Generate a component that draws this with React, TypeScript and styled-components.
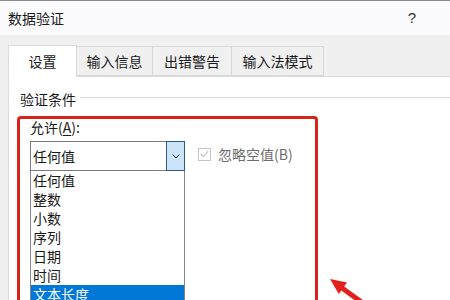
import React from 'react';
import styled, { createGlobalStyle } from 'styled-components';

const GlobalStyle = createGlobalStyle`
  html, body {
    margin: 0;
    padding: 0;
  }
  body {
    font-family: "Noto Sans CJK SC", "Noto Sans", sans-serif;
    background: #f0f0f0;
  }
`;

const Dialog = styled.div`
  position: relative;
  width: 450px;
  height: 300px;
  overflow: hidden;
  box-sizing: border-box;
  border-top: 1px solid #8c8c8c;
  background: #f0f0f0;
  display: flex;
  flex-direction: column;
`;

const TitleBar = styled.div`
  height: 34px;
  flex: none;
  display: flex;
  align-items: center;
  justify-content: space-between;
  padding: 0 34px 0 8px;
  background: #fbfafc;
  font-size: 14px;
  line-height: 16px;
  color: #1a1a1a;
`;

const Help = styled.span`
  font-family: "Liberation Sans", sans-serif;
  font-size: 15px;
  color: #333;
`;

const TabStrip = styled.div`
  flex: none;
  display: flex;
  align-items: flex-end;
  height: 41px;
  padding-left: 8px;
  box-sizing: border-box;
`;

const Tab = styled.div<{ $w: number; $active?: boolean }>`
  width: ${(p) => p.$w}px;
  height: ${(p) => (p.$active ? 32 : 30)}px;
  box-sizing: border-box;
  display: flex;
  align-items: center;
  justify-content: center;
  padding-bottom: ${(p) => (p.$active ? 1 : 0)}px;
  margin-bottom: ${(p) => (p.$active ? -1 : 0)}px;
  position: relative;
  z-index: ${(p) => (p.$active ? 1 : 0)};
  background: ${(p) => (p.$active ? '#ffffff' : '#f0f0f0')};
  border: 1px solid #d9d9d9;
  border-bottom: ${(p) => (p.$active ? 'none' : '1px solid #d9d9d9')};
  border-left: ${(p) => (p.$active ? '1px solid #d9d9d9' : 'none')};
  font-size: 14px;
  line-height: 16px;
  color: #1a1a1a;
`;

const Panel = styled.div`
  flex: 1;
  margin-left: 8px;
  background: #ffffff;
  border-top: 1px solid #d9d9d9;
  border-left: 1px solid #d9d9d9;
  padding: 14px 0 0 11px;
  box-sizing: border-box;
`;

const GroupHeader = styled.div`
  display: flex;
  align-items: center;
  gap: 4px;
  font-size: 14px;
  line-height: 16px;
  color: #1a1a1a;

  &::after {
    content: '';
    flex: 1;
    height: 1px;
    margin-top: -3px;
    background: #dcdcdc;
  }
`;

const Highlight = styled.div`
  margin: 9px 0 0 -3px;
  width: 301px;
  height: 200px;
  box-sizing: border-box;
  border: 3px solid #d8231d;
  border-radius: 4px;
  padding-left: 10px;
`;

const FieldLabel = styled.div`
  font-size: 14px;
  line-height: 16px;
  color: #1a1a1a;

  u {
    text-underline-offset: 2px;
  }
`;

const Row = styled.div`
  display: flex;
  align-items: flex-start;
  gap: 13px;
  margin-top: 6px;
`;

const Combo = styled.div`
  width: 155px;
  display: flex;
  flex-direction: column;
`;

const ComboField = styled.div`
  height: 30px;
  box-sizing: border-box;
  border: 1px solid #7a7a7a;
  display: flex;
  align-items: center;
  justify-content: space-between;
  padding-left: 2px;
  font-size: 14px;
  color: #1a1a1a;
`;

const DropButton = styled.div`
  width: 19px;
  height: 30px;
  margin: -1px -1px -1px 0;
  box-sizing: border-box;
  border: 1px solid #2f5a86;
  background: #cce4f7;
  display: flex;
  align-items: center;
  justify-content: center;
`;

const List = styled.div`
  border-left: 1px solid #828790;
  border-right: 1px solid #828790;
  display: flex;
  flex-direction: column;
`;

const Item = styled.div<{ $selected?: boolean }>`
  height: 19px;
  line-height: 19px;
  padding-left: 2px;
  font-size: 14px;
  color: ${(p) => (p.$selected ? '#ffffff' : '#1a1a1a')};
  background: ${(p) => (p.$selected ? '#0078d7' : 'transparent')};
`;

const CheckRow = styled.div`
  display: flex;
  align-items: center;
  gap: 7px;
  margin-top: 5px;
  font-size: 14px;
  line-height: 16px;
  color: #6d6d6d;
`;

const CheckBox = styled.div`
  width: 13px;
  height: 13px;
  box-sizing: border-box;
  border: 1px solid #c4c4c4;
  display: flex;
  align-items: center;
  justify-content: center;
`;

const Arrow = styled.svg`
  position: absolute;
  left: 320px;
  top: 270px;
`;

const items = ['任何值', '整数', '小数', '序列', '日期', '时间', '文本长度'];

const App: React.FC = () => (
  <Dialog>
    <GlobalStyle />
    <TitleBar>
      <span>数据验证</span>
      <Help>?</Help>
    </TitleBar>
    <TabStrip>
      <Tab $w={69} $active>设置</Tab>
      <Tab $w={76}>输入信息</Tab>
      <Tab $w={79}>出错警告</Tab>
      <Tab $w={92}>输入法模式</Tab>
    </TabStrip>
    <Panel>
      <GroupHeader>验证条件</GroupHeader>
      <Highlight>
        <FieldLabel>
          允许(<u>A</u>):
        </FieldLabel>
        <Row>
          <Combo>
            <ComboField>
              <span>任何值</span>
              <DropButton>
                <svg width="8" height="5" viewBox="0 0 8 5">
                  <path d="M0.5 0.5 L4 4 L7.5 0.5" fill="none" stroke="#333" strokeWidth="1" />
                </svg>
              </DropButton>
            </ComboField>
            <List>
              {items.map((it, i) => (
                <Item key={it} $selected={i === items.length - 1}>
                  {it}
                </Item>
              ))}
            </List>
          </Combo>
          <CheckRow>
            <CheckBox>
              <svg width="9" height="8" viewBox="0 0 9 8">
                <path d="M0.8 4 L3.3 6.5 L8.2 1" fill="none" stroke="#bdbdbd" strokeWidth="1.1" />
              </svg>
            </CheckBox>
            <span>忽略空值(B)</span>
          </CheckRow>
        </Row>
      </Highlight>
    </Panel>
    <Arrow width="70" height="40" viewBox="0 0 70 40">
      <polygon points="10,8 18.8,23.1 27,11.4" fill="#e3211c" />
      <line x1="22" y1="17" x2="58" y2="43" stroke="#e3211c" strokeWidth="5" />
    </Arrow>
  </Dialog>
);

export default App;
